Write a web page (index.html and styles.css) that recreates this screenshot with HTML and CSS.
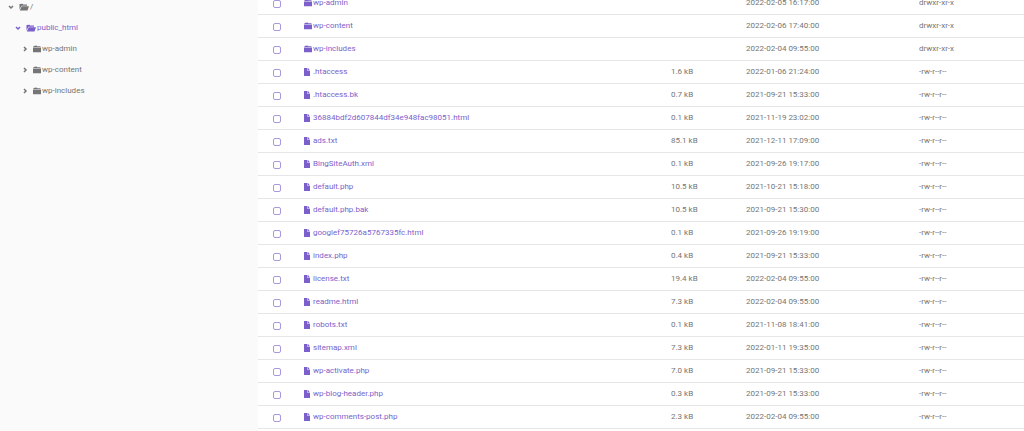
FILE: index.html
```html
<!DOCTYPE html>
<html lang="en">

<head>
    <meta charset="UTF-8">
    <meta name="viewport" content="width=device-width, initial-scale=1.0">
    <title>File Manager</title>
    <link rel="stylesheet" href="styles.css">
</head>

<body>
    <!-- Shared icons -->
    <svg class="sprite" aria-hidden="true">
        <symbol id="folder" viewBox="0 0 16 16">
            <path d="M1 4V2L7 1l1.500 1.500H15V4zM0 5h16v9.500H0z" />
        </symbol>
        <symbol id="folder-open" viewBox="0 0 20 16">
            <path d="M1 2l6-.5L8.500 3H16v2.500H5L1 13zM5.500 6.500H20L17 15H1.500z" />
        </symbol>
        <symbol id="file" viewBox="0 0 12 16">
            <path d="M0 0h7v6h5v10H0zM8 0l4 5H8z" />
        </symbol>
        <symbol id="chevron" viewBox="0 0 12 12">
            <path d="M4 2l4 4-4 4" fill="none" stroke="currentColor" stroke-width="3" />
        </symbol>
    </svg>

    <div class="container">
        <!-- Folder tree -->
        <nav class="sidebar">
            <ul class="tree">
                <li>
                    <a class="node" href="#"><svg class="chevron open"><use href="#chevron" /></svg><svg class="icon icon-open"><use href="#folder-open" /></svg>/</a>
                    <ul>
                        <li>
                            <a class="node active" href="#"><svg class="chevron open"><use href="#chevron" /></svg><svg class="icon icon-open"><use href="#folder-open" /></svg>public_html</a>
                            <ul>
                                <li><a class="node" href="#"><svg class="chevron"><use href="#chevron" /></svg><svg class="icon"><use href="#folder" /></svg>wp-admin</a></li>
                                <li><a class="node" href="#"><svg class="chevron"><use href="#chevron" /></svg><svg class="icon"><use href="#folder" /></svg>wp-content</a></li>
                                <li><a class="node" href="#"><svg class="chevron"><use href="#chevron" /></svg><svg class="icon"><use href="#folder" /></svg>wp-includes</a></li>
                            </ul>
                        </li>
                    </ul>
                </li>
            </ul>
        </nav>

        <!-- File list -->
        <main class="content">
            <table class="files">
                <colgroup>
                    <col class="col-check">
                    <col>
                    <col class="col-size">
                    <col class="col-date">
                    <col class="col-perms">
                </colgroup>
                <tbody>
                    <tr>
                        <td><input type="checkbox" aria-label="Select wp-admin"></td>
                        <td><a class="name" href="#"><svg class="icon"><use href="#folder" /></svg>wp-admin</a></td>
                        <td></td>
                        <td>2022-02-05 16:17:00</td>
                        <td>drwxr-xr-x</td>
                    </tr>
                    <tr>
                        <td><input type="checkbox" aria-label="Select wp-content"></td>
                        <td><a class="name" href="#"><svg class="icon"><use href="#folder" /></svg>wp-content</a></td>
                        <td></td>
                        <td>2022-02-06 17:40:00</td>
                        <td>drwxr-xr-x</td>
                    </tr>
                    <tr>
                        <td><input type="checkbox" aria-label="Select wp-includes"></td>
                        <td><a class="name" href="#"><svg class="icon"><use href="#folder" /></svg>wp-includes</a></td>
                        <td></td>
                        <td>2022-02-04 09:55:00</td>
                        <td>drwxr-xr-x</td>
                    </tr>
                    <tr>
                        <td><input type="checkbox" aria-label="Select .htaccess"></td>
                        <td><a class="name" href="#"><svg class="icon icon-file"><use href="#file" /></svg>.htaccess</a></td>
                        <td>1.6 kB</td>
                        <td>2022-01-06 21:24:00</td>
                        <td>-rw-r--r--</td>
                    </tr>
                    <tr>
                        <td><input type="checkbox" aria-label="Select .htaccess.bk"></td>
                        <td><a class="name" href="#"><svg class="icon icon-file"><use href="#file" /></svg>.htaccess.bk</a></td>
                        <td>0.7 kB</td>
                        <td>2021-09-21 15:33:00</td>
                        <td>-rw-r--r--</td>
                    </tr>
                    <tr>
                        <td><input type="checkbox" aria-label="Select 36884bdf2d607844df34e948fac98051.html"></td>
                        <td><a class="name" href="#"><svg class="icon icon-file"><use href="#file" /></svg>36884bdf2d607844df34e948fac98051.html</a></td>
                        <td>0.1 kB</td>
                        <td>2021-11-19 23:02:00</td>
                        <td>-rw-r--r--</td>
                    </tr>
                    <tr>
                        <td><input type="checkbox" aria-label="Select ads.txt"></td>
                        <td><a class="name" href="#"><svg class="icon icon-file"><use href="#file" /></svg>ads.txt</a></td>
                        <td>85.1 kB</td>
                        <td>2021-12-11 17:09:00</td>
                        <td>-rw-r--r--</td>
                    </tr>
                    <tr>
                        <td><input type="checkbox" aria-label="Select BingSiteAuth.xml"></td>
                        <td><a class="name" href="#"><svg class="icon icon-file"><use href="#file" /></svg>BingSiteAuth.xml</a></td>
                        <td>0.1 kB</td>
                        <td>2021-09-26 19:17:00</td>
                        <td>-rw-r--r--</td>
                    </tr>
                    <tr>
                        <td><input type="checkbox" aria-label="Select default.php"></td>
                        <td><a class="name" href="#"><svg class="icon icon-file"><use href="#file" /></svg>default.php</a></td>
                        <td>10.5 kB</td>
                        <td>2021-10-21 15:18:00</td>
                        <td>-rw-r--r--</td>
                    </tr>
                    <tr>
                        <td><input type="checkbox" aria-label="Select default.php.bak"></td>
                        <td><a class="name" href="#"><svg class="icon icon-file"><use href="#file" /></svg>default.php.bak</a></td>
                        <td>10.5 kB</td>
                        <td>2021-09-21 15:30:00</td>
                        <td>-rw-r--r--</td>
                    </tr>
                    <tr>
                        <td><input type="checkbox" aria-label="Select googlef75726a5767335fc.html"></td>
                        <td><a class="name" href="#"><svg class="icon icon-file"><use href="#file" /></svg>googlef75726a5767335fc.html</a></td>
                        <td>0.1 kB</td>
                        <td>2021-09-26 19:19:00</td>
                        <td>-rw-r--r--</td>
                    </tr>
                    <tr>
                        <td><input type="checkbox" aria-label="Select index.php"></td>
                        <td><a class="name" href="#"><svg class="icon icon-file"><use href="#file" /></svg>index.php</a></td>
                        <td>0.4 kB</td>
                        <td>2021-09-21 15:33:00</td>
                        <td>-rw-r--r--</td>
                    </tr>
                    <tr>
                        <td><input type="checkbox" aria-label="Select license.txt"></td>
                        <td><a class="name" href="#"><svg class="icon icon-file"><use href="#file" /></svg>license.txt</a></td>
                        <td>19.4 kB</td>
                        <td>2022-02-04 09:55:00</td>
                        <td>-rw-r--r--</td>
                    </tr>
                    <tr>
                        <td><input type="checkbox" aria-label="Select readme.html"></td>
                        <td><a class="name" href="#"><svg class="icon icon-file"><use href="#file" /></svg>readme.html</a></td>
                        <td>7.3 kB</td>
                        <td>2022-02-04 09:55:00</td>
                        <td>-rw-r--r--</td>
                    </tr>
                    <tr>
                        <td><input type="checkbox" aria-label="Select robots.txt"></td>
                        <td><a class="name" href="#"><svg class="icon icon-file"><use href="#file" /></svg>robots.txt</a></td>
                        <td>0.1 kB</td>
                        <td>2021-11-08 18:41:00</td>
                        <td>-rw-r--r--</td>
                    </tr>
                    <tr>
                        <td><input type="checkbox" aria-label="Select sitemap.xml"></td>
                        <td><a class="name" href="#"><svg class="icon icon-file"><use href="#file" /></svg>sitemap.xml</a></td>
                        <td>7.3 kB</td>
                        <td>2022-01-11 19:35:00</td>
                        <td>-rw-r--r--</td>
                    </tr>
                    <tr>
                        <td><input type="checkbox" aria-label="Select wp-activate.php"></td>
                        <td><a class="name" href="#"><svg class="icon icon-file"><use href="#file" /></svg>wp-activate.php</a></td>
                        <td>7.0 kB</td>
                        <td>2021-09-21 15:33:00</td>
                        <td>-rw-r--r--</td>
                    </tr>
                    <tr>
                        <td><input type="checkbox" aria-label="Select wp-blog-header.php"></td>
                        <td><a class="name" href="#"><svg class="icon icon-file"><use href="#file" /></svg>wp-blog-header.php</a></td>
                        <td>0.3 kB</td>
                        <td>2021-09-21 15:33:00</td>
                        <td>-rw-r--r--</td>
                    </tr>
                    <tr>
                        <td><input type="checkbox" aria-label="Select wp-comments-post.php"></td>
                        <td><a class="name" href="#"><svg class="icon icon-file"><use href="#file" /></svg>wp-comments-post.php</a></td>
                        <td>2.3 kB</td>
                        <td>2022-02-04 09:55:00</td>
                        <td>-rw-r--r--</td>
                    </tr>
                </tbody>
            </table>
        </main>
    </div>
</body>

</html>
```
FILE: styles.css
```css
* {
    margin: 0;
    padding: 0;
    box-sizing: border-box;
}

body {
    font-family: Roboto, Arial, sans-serif;
    font-size: 8px;
    line-height: 12px;
    background-color: #ffffff;
    color: #757575;
}

a {
    color: inherit;
    text-decoration: none;
}

.sprite {
    display: none;
}

.container {
    display: flex;
    height: 100vh;
    overflow: hidden;
}

/* Folder tree */
.sidebar {
    flex: 0 0 258px;
    background-color: #fafafa;
    overflow: hidden;
}

.tree {
    margin-top: -4px;
    padding-left: 8px;
}

.tree ul {
    padding-left: 7px;
}

.tree,
.tree ul {
    list-style: none;
}

.node {
    display: flex;
    align-items: center;
    height: 21px;
}

.node.active {
    color: #7b5fca;
}

.chevron {
    width: 6px;
    height: 6px;
    margin-right: 5px;
}

.chevron.open {
    transform: rotate(90deg);
}

.icon {
    width: 8px;
    height: 8px;
    margin-right: 1px;
    fill: currentColor;
}

.icon-open {
    width: 10px;
}

.icon-file {
    width: 6px;
    margin-right: 3px;
}

/* File list */
.content {
    flex: 1;
    overflow: hidden;
}

.files {
    width: 100%;
    margin-top: -8px;
    table-layout: fixed;
    border-collapse: separate;
    border-spacing: 0;
}

.files td {
    height: 23px;
    border-bottom: 1px solid #e6e6e6;
    vertical-align: middle;
    white-space: nowrap;
}

.col-check {
    width: 46px;
}

.col-size {
    width: 75px;
}

.col-date {
    width: 173px;
}

.col-perms {
    width: 105px;
}

.name {
    display: flex;
    align-items: center;
    color: #7b5fca;
}

input[type="checkbox"] {
    display: block;
    appearance: none;
    width: 8px;
    height: 8px;
    margin: 2px 0 0 15px;
    border: 1px solid #a899dc;
    border-radius: 2px;
    cursor: pointer;
}

input[type="checkbox"]:checked {
    background-color: #7b5fca;
}
```
